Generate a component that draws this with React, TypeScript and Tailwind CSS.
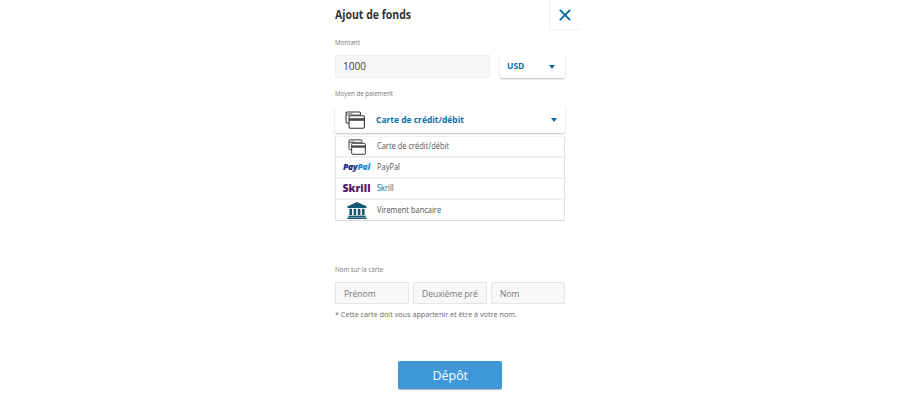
const CardIcon = ({ className }: { className: string }) => (
  <svg viewBox="0 0 20 18" className={className} fill="none">
    <path d="M15.5 4V2.2c0-.7-.5-1.2-1.2-1.2H2.2C1.5 1 1 1.5 1 2.2v8.6c0 .7.5 1.2 1.2 1.2H4" stroke="#333" strokeWidth="1.1" />
    <rect x="1" y="3.4" width="14.5" height="1.2" fill="#777" />
    <rect x="2.4" y="2" width="5" height="0.9" fill="#888" />
    <rect x="4" y="4.8" width="15.4" height="12.4" rx="1.2" fill="#fff" stroke="#333" strokeWidth="1.1" />
    <rect x="4" y="7.2" width="15.4" height="2.6" fill="#444" />
  </svg>
);

const BankIcon = () => (
  <svg viewBox="0 0 20 17" className="w-[20px] h-[17px]" fill="#13596f">
    <path d="M10 0 19.5 4.2V6H.5V4.2Z" />
    <rect x="2.4" y="6.8" width="2.6" height="6.2" />
    <rect x="6.6" y="6.8" width="2.6" height="6.2" />
    <rect x="10.8" y="6.8" width="2.6" height="6.2" />
    <rect x="15" y="6.8" width="2.6" height="6.2" />
    <rect x="1.4" y="13.6" width="17.2" height="1.4" />
    <rect x="0.4" y="15.4" width="19.2" height="1.6" />
  </svg>
);

const Caret = () => <span className="w-0 h-0 border-l-[3px] border-r-[3px] border-t-[4px] border-l-transparent border-r-transparent border-t-[#0e6fa8]" />;

const Row = ({ icon, label, last }: { icon: React.ReactNode; label: string; last?: boolean }) => (
  <div className={`flex items-center ${last ? "h-[20px]" : "h-[21px] border-b-2 border-[#f1f1f1]"}`}>
    <div className="w-[41px] flex justify-center shrink-0">{icon}</div>
    <span className="text-[8.5px] text-[#555] origin-left scale-x-[0.88]">{label}</span>
  </div>
);

export default function App() {
  return (
    <div className="w-[900px] h-[400px] bg-white overflow-hidden flex justify-center font-['Open_Sans',sans-serif]">
      <div className="w-[230px] flex flex-col">
        <div className="h-[30px] flex justify-between items-start">
          <h1 className="text-[12px] font-bold text-[#333] leading-none mt-[9px] origin-left scale-x-[0.875]">Ajout de fonds</h1>
          <button className="w-[31px] h-[30px] -mr-[15px] border-l border-b border-[#f0f0f0] flex items-center justify-center">
            <svg viewBox="0 0 14 14" className="w-[12px] h-[12px]" stroke="#0e6fa8" strokeWidth="2.4" fill="none">
              <path d="M1 1 13 13M13 1 1 13" />
            </svg>
          </button>
        </div>

        <div className="text-[7px] text-[#777] leading-none mt-[9px] origin-left scale-x-[0.89]">Montant</div>
        <div className="flex gap-[10px] mt-[9px]">
          <div className="w-[155px] h-[23px] bg-[#f7f7f7] border border-[#eeeeee] flex items-center px-[7px] text-[10px] text-[#444]">1000</div>
          <div className="w-[65px] h-[23px] bg-white rounded-[2px] shadow-[0_1px_2px_rgba(0,0,0,0.25)] flex items-center justify-between pl-[7px] pr-[10px]">
            <span className="text-[9.5px] font-bold text-[#0e6fa8] origin-left scale-x-[0.89]">USD</span>
            <Caret />
          </div>
        </div>

        <div className="text-[7px] text-[#777] leading-none mt-[12px] origin-left scale-x-[0.89]">Moyen de paiement</div>
        <div className="h-[27px] mt-[9px] bg-white rounded-[2px] shadow-[0_1px_2px_rgba(0,0,0,0.25)] flex items-center justify-between pl-[10px] pr-[8px]">
          <div className="flex items-center gap-[11px]">
            <CardIcon className="w-[20px] h-[18px]" />
            <span className="text-[9.5px] font-bold text-[#0e6fa8] pt-[1px] origin-left scale-x-[0.89]">Carte de crédit/débit</span>
          </div>
          <Caret />
        </div>

        <div className="mt-[3px] border-x border-t border-b border-x-[#e4e4e4] border-t-[#f1f1f1] border-b-[#dddddd] h-[85px]">
          <Row icon={<CardIcon className="w-[18px] h-[16px]" />} label="Carte de crédit/débit" />
          <Row
            icon={
              <span className="text-[8.5px] font-extrabold italic tracking-tight leading-none">
                <span className="text-[#1b2f78]">Pay</span>
                <span className="text-[#1d8fd0]">Pal</span>
              </span>
            }
            label="PayPal"
          />
          <Row icon={<span className="text-[10.5px] font-extrabold text-[#5a1a66] leading-none">Skrill</span>} label="Skrill" />
          <Row icon={<BankIcon />} label="Virement bancaire" last />
        </div>

        <div className="text-[7px] text-[#777] leading-none mt-[45px] origin-left scale-x-[0.89]">Nom sur la carte</div>
        <div className="flex justify-between mt-[9px]">
          {["Prénom", "Deuxième prénom", "Nom"].map((name) => (
            <input
              key={name}
              placeholder={name}
              className="w-[74px] h-[22px] bg-[#f8f8f8] border border-[#e6e6e6] px-[8px] text-[8.5px] placeholder:text-[#777] outline-none"
            />
          ))}
        </div>
        <p className="text-[8px] text-[#666] leading-none mt-[6px] origin-left scale-x-[0.905]">* Cette carte doit vous appartenir et être à votre nom.</p>

        <button className="w-[104px] h-[28px] mt-[43px] self-center bg-[#3f97d8] rounded-[2px] shadow-[0_1px_1px_rgba(0,0,0,0.3)] text-white text-[13.5px]">
          <span className="inline-block scale-x-[0.92]">Dépôt</span>
        </button>
      </div>
    </div>
  );
}
